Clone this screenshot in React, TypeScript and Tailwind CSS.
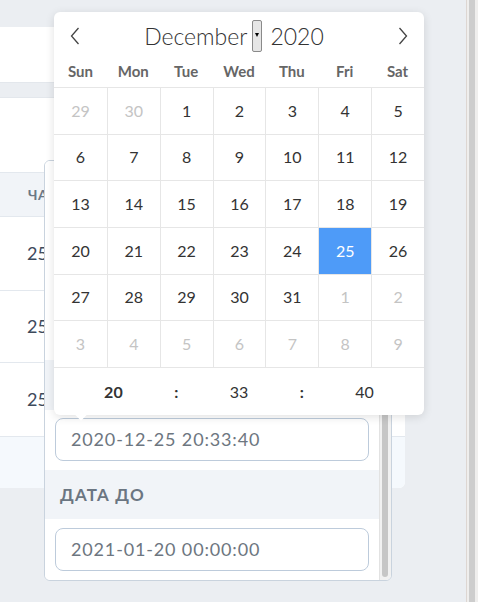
import React from 'react'

const weekDays = ['Sun', 'Mon', 'Tue', 'Wed', 'Thu', 'Fri', 'Sat']

type Day = { n: number; muted?: boolean; selected?: boolean }

const cells: Day[] = [
  { n: 29, muted: true },
  { n: 30, muted: true },
  ...Array.from({ length: 31 }, (_, i) => ({ n: i + 1, selected: i + 1 === 25 })),
  ...Array.from({ length: 9 }, (_, i) => ({ n: i + 1, muted: true })),
]

function Chevron({ dir }: { dir: 'left' | 'right' }) {
  return (
    <svg width="10" height="18" viewBox="0 0 10 18">
      <path
        d={dir === 'left' ? 'M8.5 1 1.5 9l7 8' : 'M1.5 1l7 8-7 8'}
        fill="none"
        stroke="#444"
        strokeWidth="1.3"
      />
    </svg>
  )
}

function Calendar() {
  return (
    <div className="absolute left-[54px] top-[12px] w-[370px] rounded-[6px] bg-white shadow-[0_2px_10px_rgba(0,0,0,0.12)]">
      <div className="flex h-[48px] items-center justify-between px-[16px]">
        <Chevron dir="left" />
        <div className="mr-[10px] flex items-center text-[23px] font-light text-[#333]">
          <span>December</span>
          <span className="ml-[5px] mr-[8px] flex h-[32px] w-[10px] justify-center rounded-[2px] border border-[#8a8a8a] bg-[#e6e6e6] pt-[12px]">
            <span className="block h-0 w-0 border-x-[2.5px] border-t-[4px] border-x-transparent border-t-black" />
          </span>
          <span>2020</span>
        </div>
        <Chevron dir="right" />
      </div>
      <div className="grid h-[27px] grid-cols-7 pb-[6px]">
        {weekDays.map((d) => (
          <div key={d} className="flex items-center justify-center text-[15px] font-bold text-[#666]">
            {d}
          </div>
        ))}
      </div>
      <div className="grid h-[281px] grid-cols-7 grid-rows-6 border-b border-[#e6e6e6]">
        {cells.map((c, i) => (
          <div
            key={i}
            className={`flex items-center justify-center border-t border-[#e6e6e6] text-[16px] ${
              i % 7 !== 0 ? 'border-l' : ''
            } ${c.muted ? 'text-[#c4c4c4]' : c.selected ? 'bg-[#4e9bf8] text-white' : 'text-[#333]'}`}
          >
            {c.n}
          </div>
        ))}
      </div>
      <div className="grid h-[47px] grid-cols-5 items-center px-[28px] text-center text-[16px] text-[#333]">
        <span className="font-bold">20</span>
        <span className="font-bold">:</span>
        <span>33</span>
        <span className="font-bold">:</span>
        <span>40</span>
      </div>
      <div className="absolute bottom-[-4px] left-[23px] h-[8px] w-[8px] rotate-45 bg-white" />
    </div>
  )
}

function SectionHeader({ label, h }: { label?: string; h: string }) {
  return (
    <div className={`flex items-center bg-[#f1f4f8] pl-[15px] text-[17px] font-bold uppercase tracking-[1.2px] text-[#6b7682] ${h}`}>
      {label}
    </div>
  )
}

function InputRow({ value, h, pt }: { value: string; h: string; pt: string }) {
  return (
    <div className={`bg-white px-[10px] ${h} ${pt}`}>
      <div className="flex h-[43px] items-center rounded-[8px] border border-[#bdcbdb] pl-[15px] text-[18px] tracking-[0.85px] text-[#6d7680]">
        {value}
      </div>
    </div>
  )
}

function FilterPanel() {
  return (
    <div className="absolute left-[44px] top-[160px] flex h-[421px] w-[348px] overflow-hidden rounded-[6px] border border-[#c9d3de] bg-white">
      <div className="flex flex-1 flex-col">
        <div className="h-[199px] bg-white" />
        {/* "Дата от" header sits under the calendar */}
        <SectionHeader h="h-[50px]" />
        <InputRow value="2020-12-25 20:33:40" h="h-[60px]" pt="pt-[8px]" />
        <SectionHeader label="Дата до" h="h-[49px]" />
        <InputRow value="2021-01-20 00:00:00" h="h-[61px]" pt="pt-[9px]" />
      </div>
      <div className="flex w-[12px] flex-col justify-end border-l border-[#e2e2e2] bg-[#f1f1f1] pb-[3px] pl-[2px]">
        <div className="h-[260px] w-[6px] rounded-full bg-[#c6c6c6]" />
      </div>
    </div>
  )
}

function TableRow({ h, children }: { h: string; children: React.ReactNode }) {
  return (
    <div className={`flex items-center border-b border-[#e3e8ee] pl-[27px] text-[18px] text-[#3d4a5c] ${h}`}>
      {children}
    </div>
  )
}

export default function App() {
  return (
    <div className="flex h-[602px] overflow-hidden bg-[#ebeef2] font-['Lato',sans-serif]">
      <div className="relative flex-1 pt-[27px]">
        <div className="h-[56px] w-[405px] rounded-r-[6px] border-b border-[#e3e7ec] bg-white" />
        <div className="mt-[14px] w-[405px] overflow-hidden rounded-r-[6px] border-t border-[#e3e7ec] bg-white">
          <div className="h-[74px]" />
          <div className="flex h-[45px] items-center border-y border-[#e3e8ee] bg-[#f1f4f8] pl-[28px] text-[14px] font-bold tracking-[0.5px] text-[#6b7785]">
            ЧАС
          </div>
          <TableRow h="h-[74px]">25</TableRow>
          <TableRow h="h-[72px]">25</TableRow>
          <TableRow h="h-[74px]">25</TableRow>
          <div className="h-[51px] bg-[#f5f9fd]" />
        </div>
        <FilterPanel />
        <Calendar />
      </div>
      <div className="flex w-[12px] border-l border-[#ddd6d2] bg-[#efeeed] pl-[2px] pr-[3px]">
        <div className="w-[6px] bg-[#cdcdcd]" />
      </div>
    </div>
  )
}
